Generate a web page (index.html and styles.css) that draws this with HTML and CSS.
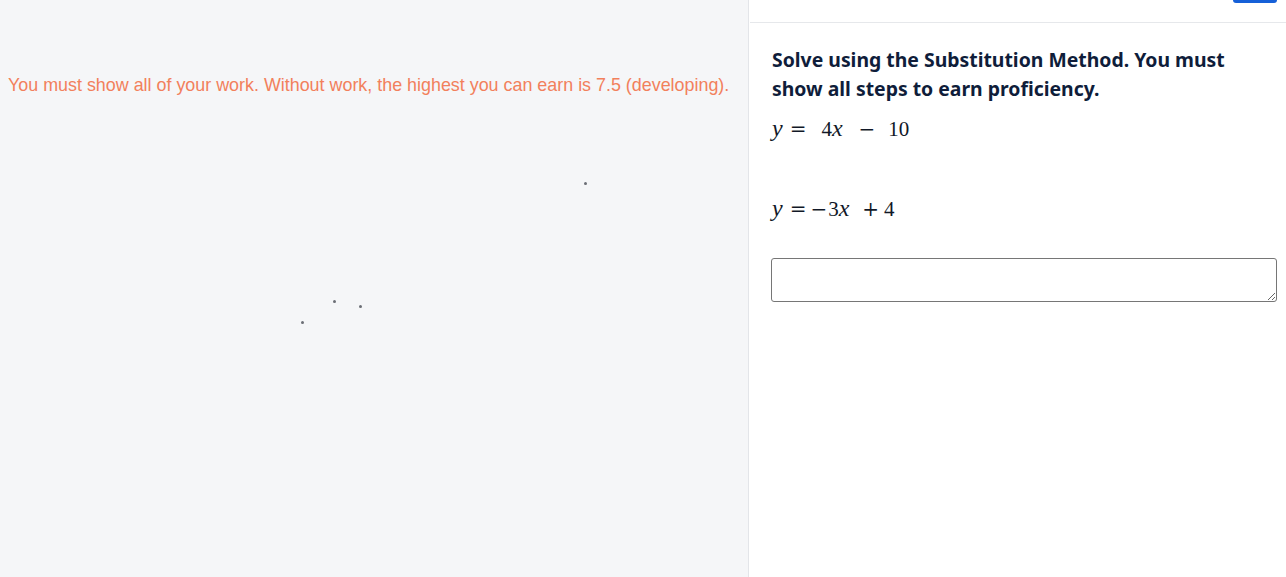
FILE: index.html
```html
<!DOCTYPE html>
<html>
<head>
<meta charset="utf-8">
<link rel="stylesheet" href="styles.css">
</head>
<body>
<div class="layout">
  <section class="work">
    <p class="notice">You must show all of your work. Without work, the highest you can earn is 7.5 (developing).</p>
    <div class="canvas">
      <span class="dot" style="left:585px;top:183px"></span>
      <span class="dot" style="left:334px;top:301px"></span>
      <span class="dot" style="left:360px;top:306px"></span>
      <span class="dot" style="left:302px;top:322px"></span>
    </div>
  </section>
  <section class="question">
    <header class="qbar"><button class="qbtn" type="button"></button></header>
    <div class="qbody">
      <h2 class="prompt">Solve using the Substitution Method. You must show all steps to earn proficiency.</h2>
      <div class="eq eq1"><i>y</i><span class="op rel">=</span><span class="n1">4</span><i>x</i><span class="op m1">−</span><span class="n2">10</span></div>
      <div class="eq eq2"><i>y</i><span class="op rel">=</span><span class="op m2">−</span><span class="n3">3</span><i>x</i><span class="op p2">+</span><span class="n4">4</span></div>
      <textarea class="answer"></textarea>
    </div>
  </section>
</div>
</body>
</html>
```

FILE: styles.css
```css
html, body {
  margin: 0;
  padding: 0;
  height: 100%;
}
body {
  font-family: "Liberation Sans", Arial, sans-serif;
  background: #ffffff;
  overflow: hidden;
}
.layout {
  display: flex;
  height: 577px;
}
.work {
  position: relative;
  width: 748px;
  flex: none;
  background: #f5f6f8;
  border-right: 1px solid #e3e5e9;
}
.notice {
  margin: 0;
  padding-top: 74px;
  padding-left: 8px;
  font-size: 17.9px;
  line-height: 22px;
  color: #f2805c;
  white-space: nowrap;
}
.canvas {
  position: absolute;
  inset: 0;
}
.dot {
  position: absolute;
  width: 3px;
  height: 3px;
  margin: -1px 0 0 -1px;
  border-radius: 50%;
  background: #6b6e75;
}
.question {
  flex: 1;
  display: flex;
  flex-direction: column;
  min-width: 0;
}
.qbar {
  height: 22px;
  border-bottom: 1px solid #e6e8eb;
  display: flex;
  justify-content: flex-end;
  padding-right: 9px;
  margin-left: 1px;
}
.qbtn {
  width: 44px;
  height: 3px;
  border: none;
  padding: 0;
  background: #1660d8;
  border-radius: 0 0 5px 5px;
}
.qbody {
  padding: 22px 9px 0 22px;
}
.prompt {
  margin: 0 0 0 1px;
  font-family: "Noto Sans", "Open Sans", sans-serif;
  font-weight: 700;
  font-size: 19.4px;
  line-height: 29px;
  color: #0f1d3a;
}
.eq {
  font-family: "Liberation Serif", serif;
  font-size: 21px;
  line-height: 30px;
  color: #111827;
  margin-left: 1px;
  white-space: nowrap;
}
.eq i {
  font-size: 24px;
  line-height: 20px;
}
.eq .op {
  font-family: "DejaVu Serif", serif;
  font-size: 20px;
  font-weight: 300;
  line-height: 20px;
}
.eq .rel {
  margin-left: 7px;
}
.eq .n1 {
  margin-left: 15px;
}
.eq .m1 {
  margin-left: 16px;
}
.eq .n2 {
  margin-left: 13px;
}
.eq .m2 {
  margin-left: 4px;
}
.eq .n3 {
  margin-left: 1px;
}
.eq .p2 {
  margin-left: 13px;
}
.eq .n4 {
  margin-left: 5px;
}
.eq1 {
  margin-top: 11px;
}
.eq2 {
  margin-top: 50px;
}
.answer {
  display: block;
  box-sizing: border-box;
  width: 506px;
  height: 44px;
  margin-top: 34px;
  border: 1px solid #767676;
  border-radius: 3px;
  background: #fff;
}
```
